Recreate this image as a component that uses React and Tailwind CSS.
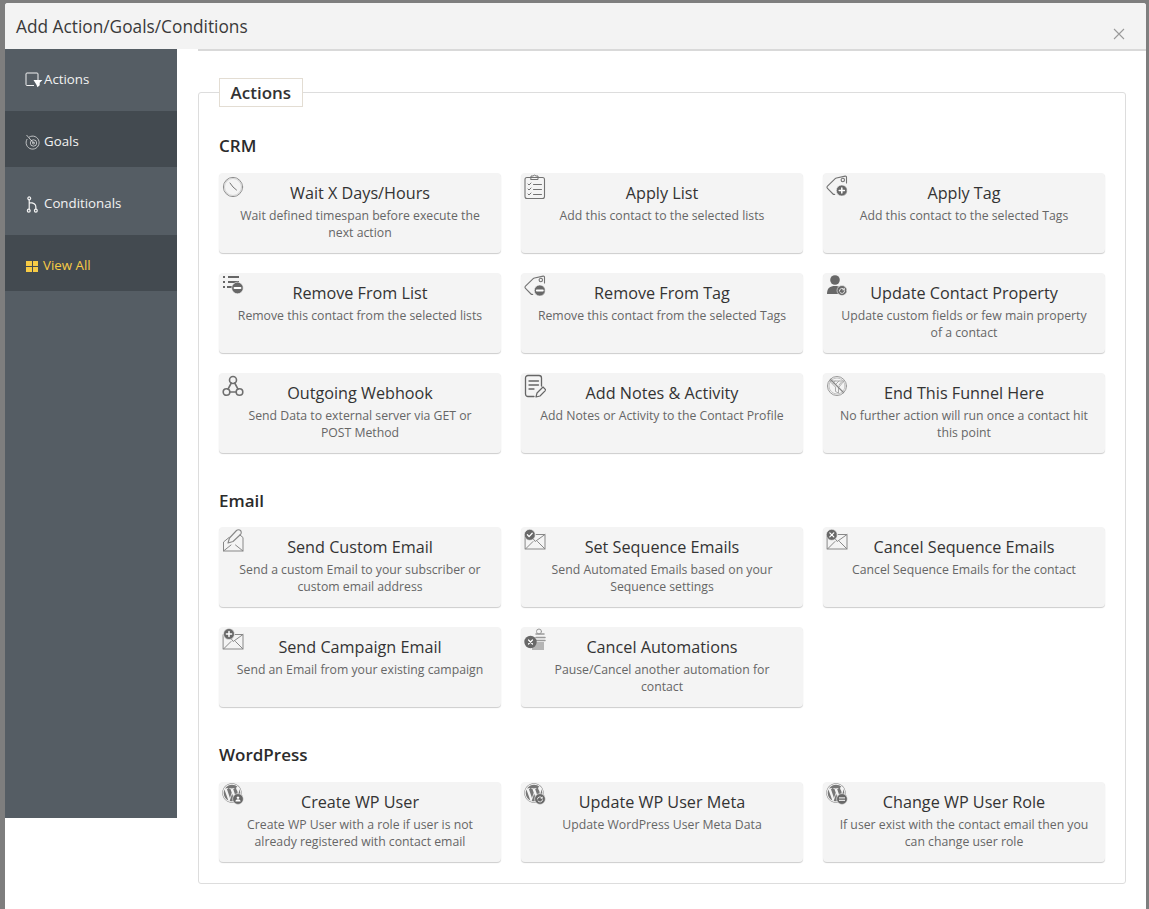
import React from "react";
import { FaWordpress } from "react-icons/fa";

const G = "#737373";

function Svg({ children, className = "w-[22px] h-[26px]", vb = "0 0 22 26" }) {
  return (
    <svg viewBox={vb} className={className} fill="none" stroke={G} strokeWidth="1" strokeLinecap="round" strokeLinejoin="round">
      {children}
    </svg>
  );
}

function Badge({ cx, cy, r = 4.6, kind }) {
  return (
    <g>
      <circle cx={cx} cy={cy} r={r} fill="#686868" stroke="#f4f4f4" strokeWidth="0.6" />
      {kind === "plus" && <path d={`M${cx - 2.6} ${cy}H${cx + 2.6}M${cx} ${cy - 2.6}V${cy + 2.6}`} stroke="#fff" strokeWidth="1.5" />}
      {kind === "minus" && <path d={`M${cx - 3} ${cy}H${cx + 3}`} stroke="#fff" strokeWidth="1.8" />}
      {kind === "check" && <path d={`M${cx - 2.4} ${cy}l1.7 1.8 3.1-3.4`} stroke="#fff" strokeWidth="1.3" />}
      {kind === "x" && <path d={`M${cx - 2} ${cy - 2}l4 4m0-4l-4 4`} stroke="#fff" strokeWidth="1.2" />}
      {kind === "sync" && <path d={`M${cx - 2.6} ${cy + .4}a2.6 2.6 0 0 1 4.8-1.3m.4 1.3a2.6 2.6 0 0 1-4.8 1.3M${cx + 2.3} ${cy - 2.3}v1.6h-1.6`} stroke="#fff" strokeWidth="0.8" />}
      {kind === "swap" && <path d={`M${cx - 3} ${cy - 1.1}h6M${cx - 3} ${cy + 1.3}h6`} stroke="#fff" strokeWidth="1" />}
      {kind === "user" && <path d={`M${cx - 2.6} ${cy + 2.4}c0-3 5.2-3 5.2 0zM${cx} ${cy - 2.6}a1.3 1.3 0 1 0 .01 0z`} fill="#fff" stroke="none" />}
    </g>
  );
}

const Tag = ({ kind }) => (
  <Svg>
    <path d="M20.5 9V3.300c0-.8-.5-1.300-1.300-1.200L10.500 4a2.500 2.500 0 0 0-1.300.7L1.500 12.200c-.7.700-.7 1.400 0 2.100L7 20c.5.500 1 .600 1.700.400" strokeWidth="1.100" />
    <circle cx="16.800" cy="6" r="1.700" strokeWidth="1.100" />
    <Badge cx={15.800} cy={16.500} r={5.500} kind={kind} />
  </Svg>
);

const Mail = ({ badge, bx = 5.800, by = 6.800 }) => (
  <Svg>
    <path d="M1.500 6.500H21V21H1.500zM1.500 21l7.500-7.500M21 21l-7.500-7.500M6 6.500l5.200 7 9.800-7" strokeWidth="1" stroke="#888" />
    <Badge cx={bx} cy={by} r={5.500} kind={badge} />
  </Svg>
);

const WP = ({ kind }) => (
  <span className="relative block h-[24px] w-[22px]">
    <FaWordpress className="absolute left-0 top-0 h-[20px] w-[20px] text-[#777]" />
    <svg viewBox="0 0 12 12" className="absolute bottom-[2px] right-0 h-[12px] w-[12px]" fill="none">
      <Badge cx={6} cy={6} r={5.400} kind={kind} />
    </svg>
  </span>
);

const icons = {
  clock: (
    <Svg>
      <circle cx="11" cy="13" r="9.600" stroke="#8e8e8e" />
      <circle cx="11" cy="13" r="8.500" stroke="#d4d4d4" />
      <path d="M8 9l3 4 3.500 3" stroke="#777" strokeWidth="1" />
    </Svg>
  ),
  clip: (
    <Svg>
      <rect x="1" y="3.500" width="19.500" height="21" rx="2" strokeWidth="1.100" />
      <path d="M7 3.500V2h2a2 2 0 0 1 3 0h2v3.500H7z" strokeWidth="1" />
      <path d="M4 10l1 1 2-2M4 15l1 1 2-2M4 20l1 1 2-2M9.500 10.500h8M9.500 15.500h8M9.500 20.500h8" strokeWidth="1" />
    </Svg>
  ),
  tagPlus: <Tag kind="plus" />,
  tagMinus: <Tag kind="minus" />,
  listMinus: (
    <Svg>
      <path d="M1 3h2M6 3h11M1 8h2M6 8h11M1 13h2M5 13h5" stroke="#666" strokeWidth="2" strokeLinecap="butt" />
      <Badge cx={15.500} cy={14} r={5.800} kind="minus" />
    </Svg>
  ),
  person: (
    <Svg>
      <circle cx="9" cy="6" r="4.800" fill="#686868" stroke="none" />
      <path d="M1 20c0-6 3-8 8-8s8 2 8 8z" fill="#686868" stroke="none" />
      <Badge cx={16} cy={16.500} r={5} kind="sync" />
    </Svg>
  ),
  hook: (
    <Svg>
      <circle cx="11" cy="6" r="3.500" stroke="#6f6f6f" strokeWidth="1.600" />
      <circle cx="4.500" cy="18" r="3.300" stroke="#6f6f6f" strokeWidth="1.600" />
      <circle cx="17.500" cy="18" r="3.300" stroke="#6f6f6f" strokeWidth="1.600" />
      <path d="M9.300 9L6 15.200M12.700 9L16 15.200M7.800 18h6.400" stroke="#6f6f6f" strokeWidth="1.600" />
    </Svg>
  ),
  note: (
    <Svg>
      <path d="M10 22.500H4a2.500 2.500 0 0 1-2.500-2.500V4A2.500 2.500 0 0 1 4 1.500h11A2.500 2.500 0 0 1 17.500 4v8" strokeWidth="1.300" stroke="#666" />
      <path d="M5 7h9.500M5 11h9.500M5 15h5" strokeWidth="1.300" stroke="#666" />
      <path d="M12 23l1-4 6-6 3 3-6 6z" strokeWidth="1.200" stroke="#666" />
    </Svg>
  ),
  end: (
    <Svg>
      <circle cx="11" cy="12" r="9.500" stroke="#999" />
      <circle cx="11" cy="12" r="8" stroke="#c4c4c4" />
      <path d="M4 7h14l-5.500 6.500V19l-3-1.500v-4zM7 9.500l2-2.500M10 10l3-3M13 11l2.500-3" stroke="#a5a5a5" strokeWidth="0.900" />
      <path d="M4.500 5.500l13 13" stroke="#888" strokeWidth="1.200" />
    </Svg>
  ),
  mailPen: (
    <Svg>
      <path d="M7 9.500L1.500 14v9H21V9.500l-3-2.500M1.500 23L9 17M21 23l-7.500-6" stroke="#888" />
      <path d="M6 15l1.500-5L14.500 2.500c1-1 3-1 4 0s1 3 0 4L11 13.500z" stroke="#888" strokeWidth="1.100" />
    </Svg>
  ),
  mailCheck: <Mail badge="check" />,
  mailX: <Mail badge="x" />,
  mailPlus: <Mail badge="plus" bx={7} by={6} />,
  auto: (
    <Svg>
      <rect x="8" y="14" width="12" height="8" fill="#b5b5b5" stroke="none" />
      <path d="M12 6h8M12 9.500h9M10 12.500h11" stroke="#999" strokeWidth="1.500" />
      <circle cx="15" cy="3.500" r="2.500" stroke="#999" />
      <circle cx="6.500" cy="14" r="6.200" fill="#686868" stroke="none" />
      <path d="M4.500 12l4 4m0-4l-4 4" stroke="#fff" strokeWidth="1.200" />
    </Svg>
  ),
  wpUser: <WP kind="user" />,
  wpSync: <WP kind="sync" />,
  wpSwap: <WP kind="swap" />,
};

const sections = [
  {
    name: "CRM",
    mb: "mb-[15px]",
    items: [
      ["clock", "Wait X Days/Hours", "Wait defined timespan before execute the next action"],
      ["clip", "Apply List", "Add this contact to the selected lists"],
      ["tagPlus", "Apply Tag", "Add this contact to the selected Tags"],
      ["listMinus", "Remove From List", "Remove this contact from the selected lists"],
      ["tagMinus", "Remove From Tag", "Remove this contact from the selected Tags"],
      ["person", "Update Contact Property", "Update custom fields or few main property of a contact"],
      ["hook", "Outgoing Webhook", "Send Data to external server via GET or POST Method"],
      ["note", "Add Notes & Activity", "Add Notes or Activity to the Contact Profile"],
      ["end", "End This Funnel Here", "No further action will run once a contact hit this point"],
    ],
  },
  {
    name: "Email",
    mb: "mb-[14px]",
    items: [
      ["mailPen", "Send Custom Email", "Send a custom Email to your subscriber or custom email address"],
      ["mailCheck", "Set Sequence Emails", "Send Automated Emails based on your Sequence settings"],
      ["mailX", "Cancel Sequence Emails", "Cancel Sequence Emails for the contact"],
      ["mailPlus", "Send Campaign Email", "Send an Email from your existing campaign"],
      ["auto", "Cancel Automations", "Pause/Cancel another automation for contact"],
    ],
  },
  {
    name: "WordPress",
    mb: "mb-[15px]",
    items: [
      ["wpUser", "Create WP User", "Create WP User with a role if user is not already registered with contact email"],
      ["wpSync", "Update WP User Meta", "Update WordPress User Meta Data"],
      ["wpSwap", "Change WP User Role", "If user exist with the contact email then you can change user role"],
    ],
  },
];

function Card({ icon, title, desc }) {
  return (
    <div className="relative h-20 rounded-[4px] bg-[#f4f4f4] px-4 pt-[8px] text-center shadow-[0_1px_1px_rgba(0,0,0,0.2)]">
      <span className="absolute left-[3px] top-[1px]">{icons[icon]}</span>
      <div className="text-[16.200px] leading-[24px] text-[#333]">{title}</div>
      <p className="mt-[2px] text-[12.250px] leading-[17px] text-[#666]">{desc}</p>
    </div>
  );
}

function NavItem({ h, dark, children, icon, yellow }) {
  return (
    <div className={`flex items-center pl-[20px] ${h} ${dark ? "bg-[#434a50]" : ""} ${yellow ? "text-[#f7cb45]" : "text-[#f2f2f2]"}`}>
      {icon}
      <span className="text-[13.300px]">{children}</span>
    </div>
  );
}

export default function App() {
  return (
    <div className="h-[909px] overflow-hidden bg-[#7e7e7e] pl-[5px] pr-[3px] pt-[3px] font-['Open_Sans','Noto_Sans',sans-serif]">
      <div className="h-[906px] rounded-t-[3px] bg-white">
        <header className="relative flex h-[46px] items-center rounded-t-[3px] bg-[#f3f3f3] pl-[11px] pt-[1px]">
          <h1 className="text-[17.300px] text-[#3a3a3a]">Add Action/Goals/Conditions</h1>
          <svg viewBox="0 0 12 12" className="absolute right-[21px] top-[25px] h-[12px] w-[12px]" stroke="#9a9a9a" strokeWidth="1.100">
            <path d="M1 1l10 10M11 1L1 11" />
          </svg>
        </header>
        <div className="flex items-start">
          <aside className="h-[769px] w-[172px] shrink-0 bg-[#555d64]">
            <NavItem h="h-[62px]" icon={
              <svg viewBox="0 0 18 16" className="mr-[1px] h-[16px] w-[18px]" fill="none" stroke="#f2f2f2" strokeWidth="1">
                <path d="M9 13.500H2a1 1 0 0 1-1-1V2a1 1 0 0 1 1-1h10a1 1 0 0 1 1 1v6" />
                <path d="M8.500 8h9l-2.800 2.800v2.400l-2.200 2-1.200-2.800z" fill="#fff" stroke="none" />
              </svg>
            }>Actions</NavItem>
            <NavItem h="h-[56px] pt-[5px]" dark icon={
              <svg viewBox="0 0 16 16" className="mr-[3px] h-[16px] w-[16px]" fill="none" stroke="#f2f2f2" strokeWidth="0.700">
                <path d="M4 3.200A6.500 6.500 0 1 1 2.200 5" />
                <circle cx="8.500" cy="9" r="3.200" />
                <circle cx="8.500" cy="9" r="1" />
                <path d="M1.500 1l7 8" />
              </svg>
            }>Goals</NavItem>
            <NavItem h="h-[68px] pt-[6px]" icon={
              <svg viewBox="0 0 16 18" className="mr-[3px] h-[17px] w-[16px]" fill="none" stroke="#f2f2f2" strokeWidth="1.300">
                <circle cx="4" cy="2.500" r="1.500" />
                <path d="M4 4v11M4 7c4 0 7 1 7 4.500V14" />
                <circle cx="3.500" cy="15.500" r="1.500" />
                <circle cx="11" cy="15.500" r="1.500" />
              </svg>
            }>Conditionals</NavItem>
            <NavItem h="h-[56px] pt-[6px]" dark yellow icon={
              <span className="ml-[1px] mr-[5px] grid h-[11px] w-[12px] grid-cols-2 gap-[1px]">
                <span className="bg-[#f7cb45]" /><span className="bg-[#f7cb45]" />
                <span className="bg-[#f7cb45]" /><span className="bg-[#f7cb45]" />
              </span>
            }>View All</NavItem>
          </aside>
          <main className="min-w-0 flex-1">
            <div className="ml-[21px] h-[2px] bg-[#d9d9d9]" />
            <div className="pl-[21px] pr-[20px] pt-[27px]">
              <fieldset className="rounded-[3px] border border-[#dddddd] px-5 pb-[21px]">
                <legend className="h-[29px] border border-[#e3ddd3] px-[10.500px] text-[17px] font-semibold leading-[27px] text-[#333]">Actions</legend>
                <div className="pt-[27px]">
                  {sections.map((s, i) => (
                    <section key={s.name} className={i ? "mt-[36px]" : ""}>
                      <h3 className={`${s.mb} text-[17px] font-semibold leading-[24px] text-[#2b2b2b]`}>{s.name}</h3>
                      <div className="grid grid-cols-3 gap-5">
                        {s.items.map(([icon, t, d]) => (
                          <Card key={t} icon={icon} title={t} desc={d} />
                        ))}
                      </div>
                    </section>
                  ))}
                </div>
              </fieldset>
            </div>
          </main>
        </div>
      </div>
    </div>
  );
}
